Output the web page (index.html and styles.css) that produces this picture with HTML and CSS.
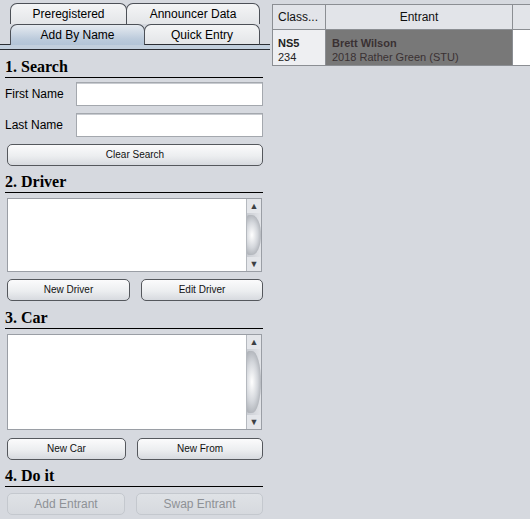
FILE: index.html
```html
<!DOCTYPE html>
<html>
<head>
<meta charset="utf-8">
<link rel="stylesheet" href="styles.css">
</head>
<body>
<div class="app">
  <div class="left">
    <div class="tabs">
      <div class="tab-row back">
        <div class="tab w116">Preregistered</div>
        <div class="tab w133">Announcer Data</div>
      </div>
      <div class="tab-row front">
        <div class="tab sel w134">Add By Name</div>
        <div class="tab w115">Quick Entry</div>
        <div class="tab-fill"></div>
      </div>
      <div class="tab-strip"></div>
    </div>
    <div class="content">
      <div class="sec-h h1">1. Search</div>
      <div class="field r1"><span class="lbl">First Name</span><div class="input"></div></div>
      <div class="field r2"><span class="lbl">Last Name</span><div class="input"></div></div>
      <div class="btn full">Clear Search</div>

      <div class="sec-h h2">2. Driver</div>
      <div class="list l-driver">
        <div class="sb"><div class="sb-up">▲</div><div class="sb-thumb"></div><div class="sb-dn">▼</div></div>
      </div>
      <div class="btn-row r-driver">
        <div class="btn">New Driver</div>
        <div class="btn">Edit Driver</div>
      </div>

      <div class="sec-h h3">3. Car</div>
      <div class="list l-car">
        <div class="sb"><div class="sb-up">▲</div><div class="sb-thumb"></div><div class="sb-dn">▼</div></div>
      </div>
      <div class="btn-row r-car">
        <div class="btn">New Car</div>
        <div class="btn">New From</div>
      </div>

      <div class="sec-h h4">4. Do it</div>
      <div class="btn-row r-do">
        <div class="btn dis">Add Entrant</div>
        <div class="btn dis">Swap Entrant</div>
      </div>
    </div>
  </div>
  <div class="right">
    <div class="table">
      <div class="thead">
        <div class="th c1">Class...</div>
        <div class="th c2 center">Entrant</div>
        <div class="th c3"></div>
      </div>
      <div class="trow">
        <div class="td c1 light"><b>NS5</b><span>234</span></div>
        <div class="td c2 dark"><b>Brett Wilson</b><span>2018 Rather Green (STU)</span></div>
        <div class="td c3 white"></div>
      </div>
    </div>
  </div>
</div>
</body>
</html>
```

FILE: styles.css
```css
* { box-sizing: border-box; }
html, body { margin: 0; padding: 0; }
body {
  width: 530px; height: 519px; overflow: hidden;
  background: #d6d9df;
  font-family: "Liberation Sans", Arial, sans-serif;
  font-size: 12px; color: #000;
}
.app { display: flex; height: 519px; }
.left { width: 270px; flex: none; }
.right { flex: 1; margin-left: 2px; padding-top: 4px; }

/* tabs */
.tabs { padding-top: 3px; }
.tab-row { display: flex; height: 21px; padding-left: 10px; }
.tab {
  height: 21px; line-height: 20px; text-align: center;
  border: 1px solid #4c5057; border-bottom: none;
  border-radius: 7px 7px 0 0;
  background: linear-gradient(#f4f5f6, #e3e5e8);
  color: #000;
}
.tab + .tab { margin-left: -1px; }
.w116 { width: 117px; }
.w133 { width: 134px; }
.w134 { width: 135px; }
.w115 { width: 116px; }
.front .tab { border-bottom: 1px solid #2a2d33; }
.front .tab.sel {
  border-bottom: none;
  background: linear-gradient(#e6ebf1, #bccbdc 70%, #b3c4d7);
}
.front::before {
  content: ""; width: 10px; margin-left: -10px; border-bottom: 1px solid #2a2d33;
}
.tab-fill { flex: 1; border-bottom: 1px solid #2a2d33; }
.tab-strip {
  height: 5px; background: #c2cfdd;
  border-bottom: 1px solid #2a2d33;
}

/* content */
.content { padding: 0 7px 0 5px; }
.sec-h {
  height: 26px; border-bottom: 1px solid #000;
  font-family: "Liberation Serif", "Times New Roman", serif;
  font-weight: bold; font-size: 16px;
  display: flex; align-items: flex-end;
  line-height: 18px; padding-bottom: 1px;
}
.h1 { margin-top: 2px; }
.h2 { margin-top: 1px; }
.h3 { margin-top: 2px; }
.h4 { margin-top: 1px; }

.field { display: flex; align-items: center; height: 24px; }
.r1 { margin-top: 4px; }
.r2 { margin-top: 7px; }
.lbl { width: 71px; flex: none; }
.input {
  flex: 1; height: 24px; background: #fff;
  border: 1px solid #a4a8ae;
  box-shadow: inset 0 1px 0 #c8cbd0;
}

.btn {
  height: 22px; border: 1px solid #55585d; border-radius: 5px;
  background: linear-gradient(#fbfbfc, #eceef0 55%, #d7dadf);
  font-size: 10px; line-height: 20px; text-align: center; color: #111;
}
.btn.full { margin: 7px 0 0 2px; }
.btn.dis {
  border-color: #c4c8ce; background: linear-gradient(#dfe2e6, #d6d9de);
  color: #8e9196; font-size: 12px;
}

.btn-row { display: flex; margin-left: 2px; }
.r-driver { margin-top: 7px; }
.r-driver .btn:first-child { width: 123px; }
.r-driver .btn:last-child { width: 122px; margin-left: 11px; }
.r-car { margin-top: 8px; }
.r-car .btn:first-child { width: 119px; }
.r-car .btn:last-child { width: 126px; margin-left: 11px; }
.r-do { margin-top: 6px; }
.r-do .btn:first-child { width: 118px; }
.r-do .btn:last-child { width: 127px; margin-left: 11px; }

.list {
  margin: 5px 1px 0 2px; background: #fff;
  border: 1px solid #9a9ea5;
  display: flex; justify-content: flex-end;
}
.l-driver { height: 74px; }
.l-car { height: 96px; }
.sb {
  width: 15px; height: 100%;
  background: linear-gradient(90deg, #c9ccd2, #e2e4e8);
  border-left: 1px solid #b5b9bf;
  display: flex; flex-direction: column;
}
.sb-up, .sb-dn {
  height: 14px; font-size: 9px; line-height: 14px; text-align: center;
  color: #3c3f44; background: #e4e6ea; flex: none;
}
.sb-thumb {
  flex: 1; margin: 2px 0;
  border-radius: 2px 9px 9px 2px / 2px 50% 50% 2px;
  background: radial-gradient(ellipse at 35% 50%, #ffffff 0%, #d4d7dc 45%, #8f939a 100%);
}

/* table */
.table { border-top: 1px solid #8b8e93; }
.thead, .trow { display: flex; }
.thead { height: 25px; border-bottom: 1px solid #8b8e93; }
.trow { height: 36px; border-bottom: 1px solid #8b8e93; }
.c1 { width: 53px; border-left: 1px solid #8b8e93; }
.c2 { width: 187px; border-left: 1px solid #8b8e93; }
.c3 { flex: 1; border-left: 1px solid #8b8e93; }
.th {
  background: #e2e4e9; line-height: 25px; padding-left: 5px; color: #111;
}
.th.center { text-align: center; padding-left: 0; }
.td {
  font-size: 11px; display: flex; flex-direction: column;
  padding: 6px 0 0 5px; line-height: 14px;
}
.td b { font-weight: bold; }
.light { background: #eeeff2; color: #222; }
.dark { background: #787878; color: #3a3133; padding-left: 6px; }
.white { background: #fff; }
```
